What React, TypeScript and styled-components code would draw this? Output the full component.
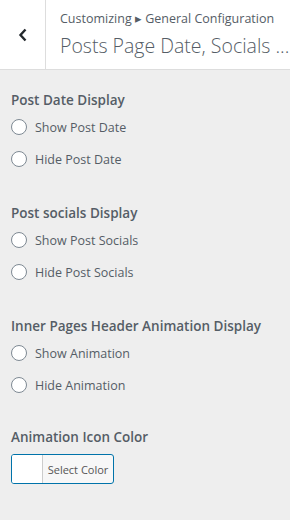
import React from 'react'
import styled, { createGlobalStyle } from 'styled-components'

const GlobalStyle = createGlobalStyle`
  html, body {
    margin: 0;
    padding: 0;
    background: #eeeeee;
  }
  body {
    font-family: 'Open Sans', 'Noto Sans', sans-serif;
    color: #555d66;
    width: 290px;
    height: 520px;
    overflow: hidden;
  }
`

const Header = styled.div`
  display: flex;
  height: 69px;
  background: #ffffff;
  border-bottom: 1px solid #dddddd;
`
const BackButton = styled.button`
  width: 46px;
  flex-shrink: 0;
  border: none;
  border-right: 1px solid #dddddd;
  background: #ffffff;
  display: flex;
  align-items: center;
  justify-content: center;
  padding: 0 0 0 1px;
  cursor: pointer;
  color: #23282d;
`
const HeaderText = styled.div`
  display: flex;
  flex-direction: column;
  justify-content: center;
  padding: 0 8px 0 14px;
  min-width: 0;
`
const Breadcrumb = styled.span`
  font-size: 12.5px;
  line-height: 18px;
  color: #555d66;
  white-space: nowrap;
`
const PanelTitle = styled.h2`
  margin: 5px 0 0;
  font-size: 19.5px;
  font-weight: 300;
  line-height: 26px;
  color: #555d66;
  white-space: nowrap;
`
const Content = styled.div`
  padding: 20px 11px;
  display: flex;
  flex-direction: column;
  gap: 28px;
`
const Section = styled.div<{ $tight?: boolean }>`
  display: flex;
  flex-direction: column;
  margin-top: ${(p) => (p.$tight ? '-2px' : '0')};
`
const SectionTitle = styled.span`
  font-size: 13.5px;
  font-weight: 600;
  line-height: 20px;
  color: #555d66;
  margin-bottom: 1px;
`
const RadioRow = styled.label`
  display: flex;
  align-items: center;
  gap: 8px;
  height: 32px;
  font-size: 12.5px;
  color: #555d66;
  cursor: pointer;
`
const RadioCircle = styled.span`
  width: 14px;
  height: 14px;
  border-radius: 50%;
  border: 1px solid #7e8993;
  background: #ffffff;
  flex-shrink: 0;
`
const ColorButton = styled.button`
  margin-top: 6px;
  display: flex;
  align-items: stretch;
  width: 103px;
  height: 30px;
  padding: 0;
  border: 1px solid #0073aa;
  border-radius: 3px;
  background: #f7f7f7;
  overflow: hidden;
  cursor: pointer;
  font-family: inherit;
`
const Swatch = styled.span<{ $color: string }>`
  width: 30px;
  background: ${(p) => p.$color};
  border-right: 1px solid #cccccc;
`
const ColorLabel = styled.span`
  flex: 1;
  display: flex;
  align-items: center;
  justify-content: center;
  font-size: 11px;
  color: #555555;
`

const sections = [
  { title: 'Post Date Display', options: ['Show Post Date', 'Hide Post Date'] },
  { title: 'Post socials Display', options: ['Show Post Socials', 'Hide Post Socials'] },
  { title: 'Inner Pages Header Animation Display', options: ['Show Animation', 'Hide Animation'] },
]

const App: React.FC = () => {
  return (
    <>
      <GlobalStyle />
      <Header>
        <BackButton aria-label="Back">
          <svg width="10" height="14" viewBox="0 0 10 14">
            <path d="M7.5 1.5 L2.5 7 L7.5 12.5" fill="none" stroke="currentColor" strokeWidth="2.4" />
          </svg>
        </BackButton>
        <HeaderText>
          <Breadcrumb>Customizing ▸ General Configuration</Breadcrumb>
          <PanelTitle>Posts Page Date, Socials ...</PanelTitle>
        </HeaderText>
      </Header>
      <Content>
        {sections.map((s) => (
          <Section key={s.title}>
            <SectionTitle>{s.title}</SectionTitle>
            {s.options.map((o) => (
              <RadioRow key={o}>
                <RadioCircle />
                {o}
              </RadioRow>
            ))}
          </Section>
        ))}
        <Section $tight>
          <SectionTitle>Animation Icon Color</SectionTitle>
          <ColorButton>
            <Swatch $color="#ffffff" />
            <ColorLabel>Select Color</ColorLabel>
          </ColorButton>
        </Section>
      </Content>
    </>
  )
}

export default App
